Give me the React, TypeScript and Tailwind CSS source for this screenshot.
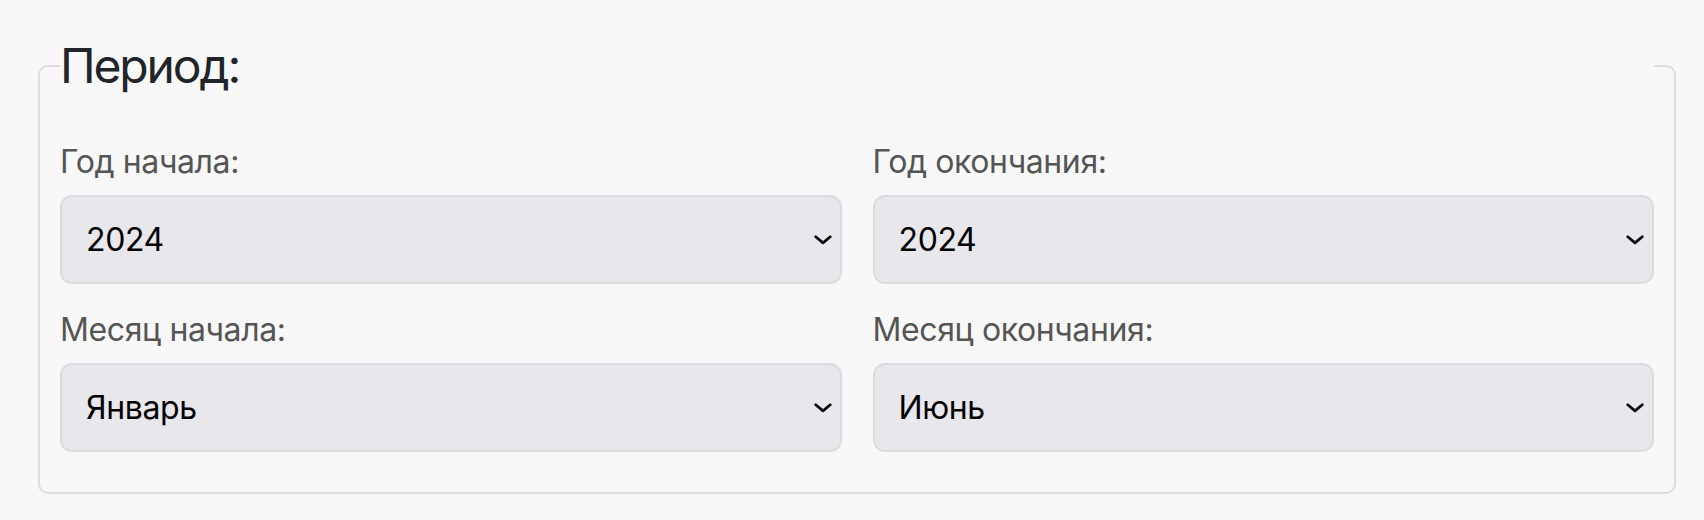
import React from "react";

const years = ["2022", "2023", "2024", "2025"];
const months = [
  "Январь",
  "Февраль",
  "Март",
  "Апрель",
  "Май",
  "Июнь",
  "Июль",
  "Август",
  "Сентябрь",
  "Октябрь",
  "Ноябрь",
  "Декабрь",
];

function Chevron() {
  return (
    <svg
      className="pointer-events-none absolute right-[10px] top-1/2 -translate-y-1/2"
      width="18"
      height="10"
      viewBox="0 0 18 10"
      fill="none"
    >
      <path
        d="M1.7 1.8 L9 7.9 L16.3 1.8"
        stroke="#0a0a0a"
        strokeWidth="2.8"
        strokeLinecap="round"
        strokeLinejoin="round"
      />
    </svg>
  );
}

function Field({
  label,
  value,
  options,
}: {
  label: string;
  value: string;
  options: string[];
}) {
  return (
    <div className="flex flex-col">
      <label className="mb-[9px] text-[32px] leading-[48px] tracking-[-0.012em] text-[#555555]">
        {label}
      </label>
      <div className="relative">
        <select
          defaultValue={value}
          className="block h-[89px] w-full appearance-none rounded-[12px] border-2 border-[#dcdce0] bg-[#e8e7ec] pl-[24px] pr-[48px] text-[32px] tracking-[-0.012em] text-black outline-none"
          style={{ fontFamily: "Inter, 'Noto Sans', sans-serif" }}
        >
          {options.map((o) => (
            <option key={o} value={o}>
              {o}
            </option>
          ))}
        </select>
        <Chevron />
      </div>
    </div>
  );
}

export default function App() {
  return (
    <div
      className="min-h-[520px] w-full bg-[#f8f8f8] pt-[37px]"
      style={{ fontFamily: "Inter, 'Noto Sans', sans-serif" }}
    >
      <fieldset className="ml-[38px] w-[1638px] rounded-[10px] border-2 border-[#dddddd] px-[20px] pb-[40px]">
        <legend className="w-full text-[48px] leading-[58px] tracking-[-0.045em] text-[#212529]">
          Период:
        </legend>
        <div className="mt-[43px] grid grid-cols-2 gap-x-[31px] gap-y-[22px]">
          <Field label="Год начала:" value="2024" options={years} />
          <Field label="Год окончания:" value="2024" options={years} />
          <Field label="Месяц начала:" value="Январь" options={months} />
          <Field label="Месяц окончания:" value="Июнь" options={months} />
        </div>
      </fieldset>
    </div>
  );
}
